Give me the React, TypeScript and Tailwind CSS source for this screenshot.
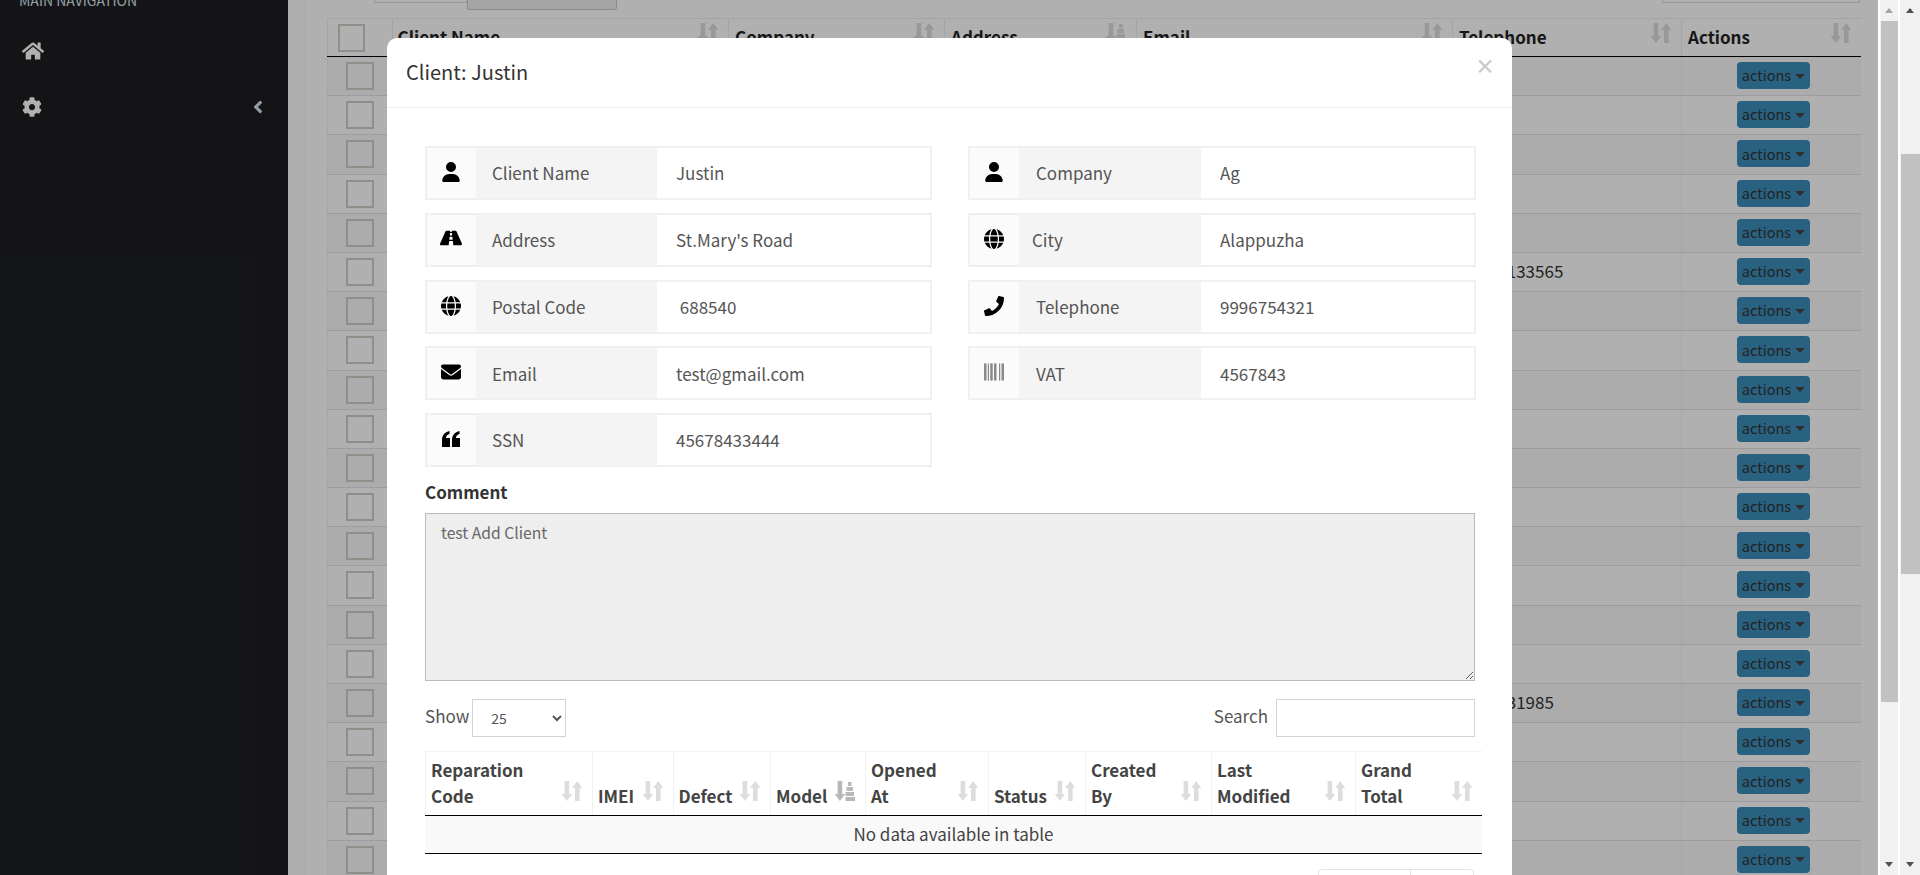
import { FaHome, FaCog, FaAngleLeft, FaRoad, FaPhone } from 'react-icons/fa';
import { FaUser, FaGlobe, FaEnvelope, FaBarcode } from 'react-icons/fa6';
import type { ReactNode } from 'react';

const pageHeaders = [
  { label: 'Company', active: false },
  { label: 'Address', active: true },
  { label: 'Email', active: false },
  { label: 'Telephone', active: false },
  { label: 'Actions', active: false },
];

// telephone numbers that stick out from behind the modal
const phones: Record<number, string> = { 5: '9961133565', 16: '996131985' };
const rows = Array.from({ length: 21 }, (_, i) => i);

function QuoteIcon() {
  return (
    <svg viewBox="0 0 18 16" className="h-[16px] w-[18px]" fill="currentColor">
      <path d="M0 9C0 4 3 1 7.5 0v3C5.4 3.6 4 5 4 7h4v9H0z" />
      <path d="M10 9c0-5 3-8 7.5-9v3C15.4 3.6 14 5 14 7h4v9h-8z" />
    </svg>
  );
}

const leftFields = [
  { icon: <FaUser />, label: 'Client Name', value: 'Justin' },
  { icon: <FaRoad className="mb-[2px] text-[22px]" />, label: 'Address', value: "St.Mary's Road" },
  { icon: <FaGlobe />, label: 'Postal Code', value: ' 688540' },
  { icon: <FaEnvelope />, label: 'Email', value: 'test@gmail.com' },
  { icon: <QuoteIcon />, label: 'SSN', value: '45678433444' },
];

const rightFields = [
  { icon: <FaUser />, label: 'Company', value: 'Ag', pad: 'pl-[17px]' },
  { icon: <FaGlobe />, label: 'City', value: 'Alappuzha', pad: 'pl-[13px]' },
  { icon: <FaPhone />, label: 'Telephone', value: '9996754321', pad: 'pl-[17px]' },
  { icon: <FaBarcode className="text-[#8a8a8a]" />, label: 'VAT', value: '4567843', pad: 'pl-[17px]' },
];

const repairColumns = [
  { label: ['Reparation', 'Code'], active: false },
  { label: ['IMEI'], active: false },
  { label: ['Defect'], active: false },
  { label: ['Model'], active: true },
  { label: ['Opened', 'At'], active: false },
  { label: ['Status'], active: false },
  { label: ['Created', 'By'], active: false },
  { label: ['Last', 'Modified'], active: false },
  { label: ['Grand', 'Total'], active: false },
];

function SortIcon({ active, className }: { active: boolean; className: string }) {
  return (
    <svg viewBox="0 0 20 20" className={className} fill="currentColor">
      <path d="M2.6 0h4.6v13h3L4.9 20-.4 13h3z" />
      {active ? (
        <>
          <rect x="13" y="1" width="3.5" height="4" />
          <rect x="11.5" y="6" width="6.5" height="4" />
          <rect x="10.5" y="11" width="8.5" height="4" />
          <rect x="10.5" y="16" width="9.5" height="4" />
        </>
      ) : (
        <path d="M13 20h4.6V7h2.8L15.3 0 10 7h3z" />
      )}
    </svg>
  );
}

function Field({ icon, label, value, pad = 'pl-4', wide = false }: { icon: ReactNode; label: string; value: string; pad?: string; wide?: boolean }) {
  return (
    <div className="flex h-[54px] border-2 border-[#f0f0f0] text-[17px] text-[#555]">
      <div className="flex w-[49px] shrink-0 items-center justify-center bg-[#fbfbfb] pb-[2px] pr-[1px] text-[20px] text-black">{icon}</div>
      <div className={`flex shrink-0 items-center bg-[#f4f4f4] ${pad} ${wide ? 'w-[182px]' : 'w-[181px]'}`}>{label}</div>
      <input readOnly value={value} className="min-w-0 flex-1 bg-white pl-[19px] outline-none" />
    </div>
  );
}

function ActionsButton() {
  return (
    <div className="mx-auto flex h-[27px] w-[73px] items-center justify-center gap-[4px] rounded-[4px] bg-[#3c8dbc] text-[14.5px] leading-none text-[#333]">
      <span>actions</span>
      <span className="mt-[1px] border-x-[5px] border-t-[5px] border-x-transparent border-t-[#444]" />
    </div>
  );
}

export default function App() {
  return (
    <div className="relative flex h-[875px] w-[1920px] overflow-hidden bg-white font-['Noto_Sans_CJK_SC',sans-serif] text-[17px] text-[#333]">
      {/* Sidebar */}
      <aside className="w-[288px] shrink-0 bg-[#1d1e21] text-white">
        <div className="-mt-[10px] pl-[19px] text-[14px] leading-[20px] text-[#d6e4ee]">MAIN NAVIGATION</div>
        <div className="pl-[22px] pt-[30px] text-[22px]">
          <FaHome />
        </div>
        <div className="flex items-center justify-between pl-[22px] pr-[20px] pt-[35px] text-[20px]">
          <FaCog />
          <FaAngleLeft className="text-[#d6e4ee]" />
        </div>
      </aside>

      {/* Page behind the modal */}
      <main className="w-[1590px] shrink-0 bg-[#fbfbfb] pl-[18px]">
        <div className="h-full bg-white pl-[20.5px]">
          <div className="flex h-[17.5px] items-start">
            <div className="ml-[47.5px] h-[3px] w-[93px] border border-t-0 border-[#dddddd]" />
            <div className="h-[10px] w-[150px] rounded-b-[3px] border border-t-0 border-[#c8c8c8] bg-[#f0f0f0]" />
            <div className="ml-[1045px] h-[3px] w-[198px] border border-t-0 border-[#dddddd]" />
          </div>
          <div className="w-[1534.5px]">
            <div className="grid h-[39.5px] grid-cols-[65px_336.5px_216px_192px_316px_229px_180px] border-y border-b-black border-t-[#eeeeee] font-bold text-[#222]">
              <div className="border-l border-[#eeeeee] pl-[10px] pt-[5px]">
                <div className="h-[28px] w-[27px] border-2 border-[#cfcfc8]" />
              </div>
              <div className="relative border-l border-[#eeeeee] pl-[5px] pt-[5px] leading-[26px]">
                Client Name
                <SortIcon active={false} className="absolute right-[10px] top-[4px] size-[20px] text-[#dcdcdc]" />
              </div>
              {pageHeaders.map((h) => (
                <div key={h.label} className="relative border-l border-[#eeeeee] pl-[6px] pt-[5px] leading-[26px]">
                  {h.label}
                  <SortIcon active={h.active} className="absolute right-[10px] top-[4px] size-[20px] text-[#dcdcdc]" />
                </div>
              ))}
            </div>
            {rows.map((r) => (
              <div
                key={r}
                className={`grid h-[39.2px] grid-cols-[65px_336.5px_216px_192px_316px_229px_180px] border-b border-[#e2e2e2] ${r % 2 === 0 ? 'bg-[#fafafa]' : 'bg-white'}`}
              >
                <div className="border-l border-[#f2f2f2] pl-[18px] pt-[5px]">
                  <div className="h-[28px] w-[28px] border-2 border-[#cfcfc8]" />
                </div>
                <div className="border-l border-[#f2f2f2]" />
                <div className="border-l border-[#f2f2f2]" />
                <div className="border-l border-[#f2f2f2]" />
                <div className="border-l border-[#f2f2f2]" />
                <div className="border-l border-[#f2f2f2] pl-[16px] pt-[5px] leading-[26px]">{phones[r]}</div>
                <div className="border-l border-[#f2f2f2] pl-[4px] pt-[5px]">
                  <ActionsButton />
                </div>
              </div>
            ))}
          </div>
        </div>
      </main>

      {/* Backdrop */}
      <div className="absolute left-0 top-0 h-full w-[1878px] bg-black/[0.31]" />

      {/* Scrollbars */}
      <div className="ml-[2px] flex h-full w-[18px] flex-col items-center bg-[#f1f1f1]">
        <div className="mt-[8px] h-0 w-0 border-x-[4.5px] border-b-[5px] border-x-transparent border-b-[#a3a3a3]" />
        <div className="mt-[8px] h-[681px] w-[17px] bg-[#c1c1c1]" />
        <div className="mt-[160px] h-0 w-0 border-x-[4.5px] border-t-[5px] border-x-transparent border-t-[#505050]" />
      </div>
      <div className="ml-[2px] flex h-full w-[20px] flex-col items-center bg-[#f1f1f1]">
        <div className="mt-[8px] h-0 w-0 border-x-[4.5px] border-b-[5px] border-x-transparent border-b-[#505050]" />
        <div className="mt-[141px] h-[420px] w-[19px] bg-[#c1c1c1]" />
        <div className="mt-[288px] h-0 w-0 border-x-[4.5px] border-t-[5px] border-x-transparent border-t-[#505050]" />
      </div>

      {/* Client modal */}
      <div className="absolute left-[387px] top-[38px] h-[900px] w-[1125px] rounded-[10px] bg-white">
        <div className="relative h-[70px] border-b border-[#f0f0f0] pl-[19px] pt-[20px] text-[20px] leading-[28px] text-[#333]">
          Client: Justin
          <span className="absolute right-[17px] top-[14px] text-[20px] font-bold leading-[28px] text-[#c8c8c8]">×</span>
        </div>

        <div className="px-[38px] pt-[38px]">
          <div className="grid grid-cols-[507px_508px] gap-x-[36px]">
            <div className="flex flex-col gap-[12.75px]">
              {leftFields.map((f) => (
                <Field key={f.label} {...f} />
              ))}
            </div>
            <div className="flex flex-col gap-[12.75px]">
              {rightFields.map((f) => (
                <Field key={f.label} {...f} wide />
              ))}
            </div>
          </div>

          <div className="pt-[12px] font-bold leading-[26px] text-[#333]">Comment</div>
          <textarea
            readOnly
            value="test Add Client"
            className="mt-[8px] block h-[168px] w-[1050px] border border-[#bbbbbb] bg-[#eeeeee] px-[15px] py-[6.5px] text-[15.7px] leading-[24px] text-[#666] outline-none"
          />

          <div className="mt-[18px] flex h-[38px] w-[1050px] items-center">
            <span className="pb-[4px] text-[#555]">Show</span>
            <select defaultValue="25" className="ml-[3px] h-[38px] w-[94px] border border-[#ced4da] bg-white pl-[14px] text-[14px] text-[#555]">
              <option>25</option>
            </select>
            <span className="ml-auto pb-[4px] text-[#555]">Search</span>
            <input className="ml-[8px] h-[38px] w-[199px] border border-[#ced4da] bg-white" />
          </div>

          <div className="mt-[14px] w-[1057px]">
            <div className="grid h-[64.5px] grid-cols-[167px_80.5px_97.5px_95px_123px_97px_126px_144px_127px] border-b border-t border-b-black border-t-[#f2f2f2] font-bold leading-[26px] text-[#444]">
              {repairColumns.map((c) => (
                <div key={c.label[0]} className="relative flex flex-col justify-end border-l border-[#f2f2f2] pb-[6px] pl-[5px]">
                  {c.label.map((line) => (
                    <div key={line}>{line}</div>
                  ))}
                  <SortIcon active={c.active} className={`absolute right-[10px] top-[29px] size-[20px] ${c.active ? 'text-[#b8b8b8]' : 'text-[#dddddd]'}`} />
                </div>
              ))}
            </div>
            <div className="h-[38px] border-b border-black bg-[#f9f9f9] text-center leading-[36px] text-[#444]">No data available in table</div>
          </div>

          <div className="mt-[15px] flex h-[40px] justify-end">
            <div className="flex w-[156px] rounded-[4px] border border-[#dee2e6]">
              <div className="w-[92px] border-r border-[#dee2e6]" />
              <div className="flex-1" />
            </div>
          </div>
        </div>
      </div>
    </div>
  );
}
